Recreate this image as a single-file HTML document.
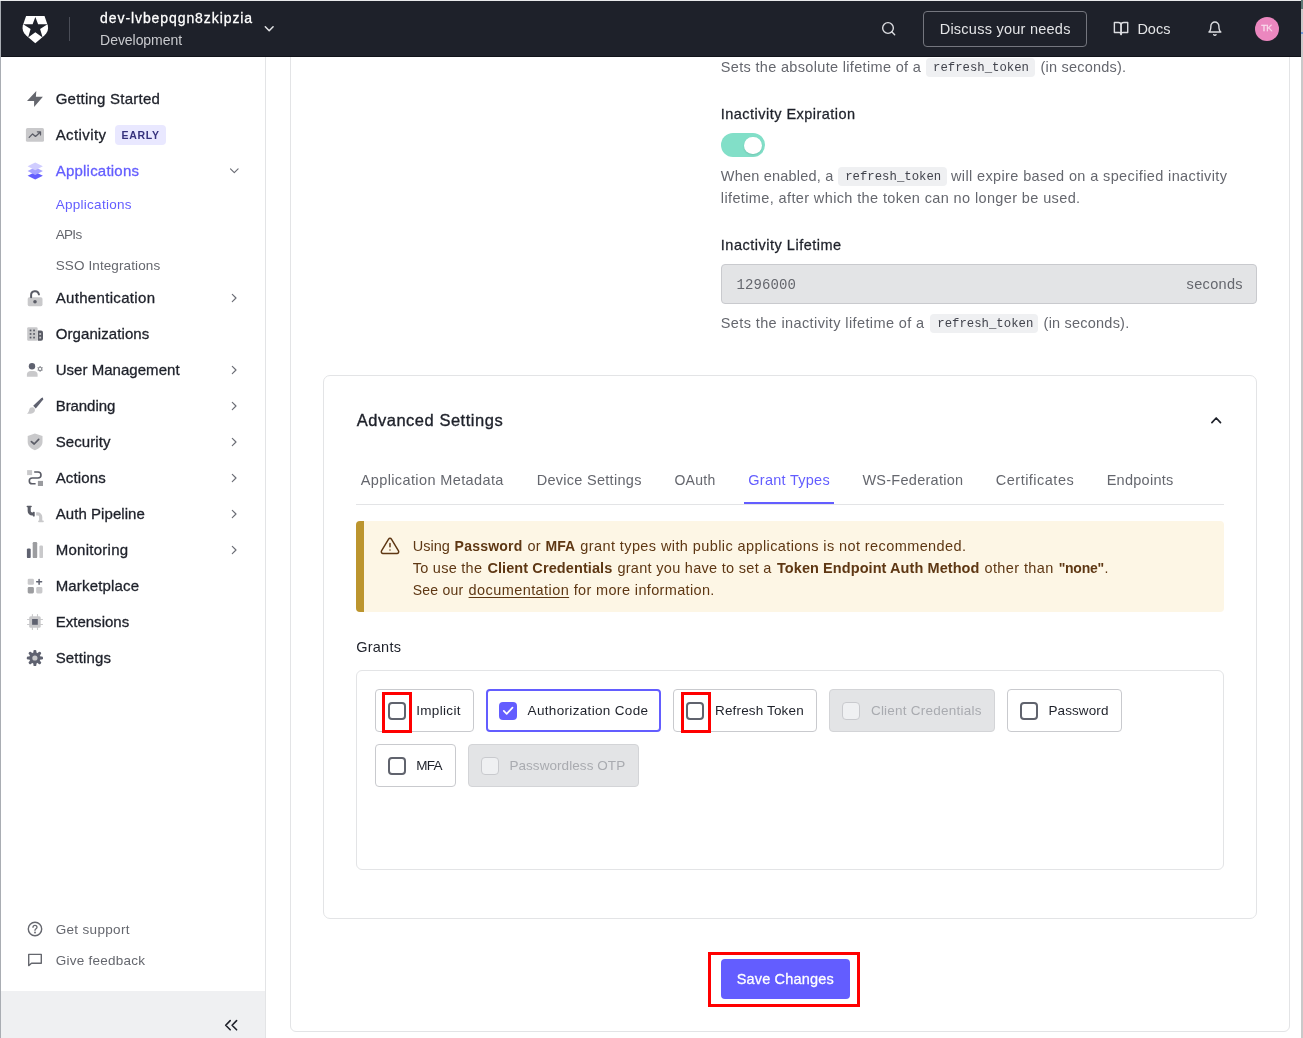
<!DOCTYPE html>
<html lang="en">
<head>
<meta charset="utf-8">
<title>Application Settings - Grant Types</title>
<style>
*{box-sizing:border-box;margin:0;padding:0}
html,body{width:1303px;height:1038px;overflow:hidden;background:#fff}
body{font-family:"Liberation Sans",sans-serif;color:#1e212a;position:relative;font-size:14px}
.a{position:absolute}
.t{position:absolute;white-space:nowrap}
#tx{position:absolute;left:0;top:0;width:1303px;height:1038px;will-change:transform}
svg{position:absolute;left:0;top:0;display:block;overflow:visible}
#fl{left:0;top:0;width:1px;height:1038px;background:#a9adb3}
#ft{left:0;top:0;width:1303px;height:1px;background:#e9eaeb}
#fr{left:1301px;top:0;width:2px;height:1038px;background:#c9c9c9}
#fr2{left:1301px;top:0;width:2px;height:9px;background:#5f7976}
#fr3{left:1301px;top:32px;width:2px;height:2px;background:#6f97d8}
#hdr{left:1px;top:1px;width:1300px;height:56px;background:#1e212a;border-bottom:1px solid #11131a}
#sideb{left:265px;top:57px;width:1px;height:981px;background:#e3e4e6}
#sfoot{left:1px;top:991px;width:264px;height:47px;background:#eff0f2}
#outer{left:290px;top:30px;width:1000px;height:1002px;border:1px solid #e3e4e6;border-radius:6px;background:#fff}
#card{left:323px;top:375px;width:934px;height:544px;border:1px solid #e3e4e6;border-radius:7px;background:#fff}
#tabline{left:356px;top:504px;width:868px;height:1px;background:#e3e4e6}
#tabact{left:744px;top:501.5px;width:90px;height:2.5px;background:#635dff}
#alert{left:356px;top:521px;width:868px;height:91px;background:#fdf6e5;border-radius:4px;overflow:hidden}
#alert i{position:absolute;left:0;top:0;width:8px;height:100%;background:#bc952e}
#gbox{left:356px;top:670px;width:868px;height:200px;border:1px solid #e3e4e6;border-radius:6px}
.chip{position:absolute;height:43px;border:1px solid #c9cace;border-radius:4px;background:#fff}
.chip.dis{background:#e3e4e6;border-color:#d3d4d7}
.chip.on{border:2px solid #635dff}
.cb{position:absolute;width:18px;height:18px;border:2px solid #60636d;border-radius:4px;background:#fff}
.cb.dis{border:1.5px solid #c9cace;background:#eff0f2}
.cb.on{border:0;background:#635dff}
.code{position:absolute;height:19px;background:#eff0f2;border-radius:4px}
#input{left:721px;top:264px;width:536px;height:40px;background:#e3e4e6;border:1px solid #c9cace;border-radius:4px}
#tog{left:721px;top:133.2px;width:44.2px;height:24px;border-radius:12px;background:#82dfc8}
#knob{left:744.3px;top:136.5px;width:17.4px;height:17.4px;border-radius:50%;background:#fff;box-shadow:0 1px 2px rgba(0,0,0,.12)}
#save{left:721px;top:959px;width:129px;height:40px;border-radius:4px;background:#635dff}
#disc{left:923px;top:11px;width:164px;height:36px;border:1px solid #74767e;border-radius:4px}
#ava{left:1254.9px;top:16.9px;width:24.3px;height:24.3px;border-radius:50%;background:#eb87bf}
#early{left:115px;top:125px;width:51px;height:20px;border-radius:4px;background:#e9e8ff}
.red{position:absolute;border:3px solid #ff0000}
</style>
</head>
<body>
<div class="a" id="outer"></div>
<div class="a" id="hdr"></div>
<div class="a" id="sideb"></div>
<div class="a" id="sfoot"></div>
<div class="a" id="disc"></div>
<div class="a" id="ava"></div>
<div class="a" id="early"></div>

<div class="code" style="left:926px;top:58px;width:109px"></div>
<div class="code" style="left:838.3px;top:166.5px;width:108.5px"></div>
<div class="code" style="left:930.4px;top:314px;width:108px"></div>
<div class="a" id="tog"></div><div class="a" id="knob"></div>
<div class="a" id="input"></div>

<div class="a" id="card"></div>
<div class="a" id="tabline"></div>
<div class="a" id="tabact"></div>
<div class="a" id="alert"><i></i></div>
<div class="a" id="gbox"></div>

<div class="chip" style="left:375px;top:689px;width:99px"></div>
<div class="chip on" style="left:486px;top:689px;width:175px"></div>
<div class="chip" style="left:673px;top:689px;width:144px"></div>
<div class="chip dis" style="left:829px;top:689px;width:166px"></div>
<div class="chip" style="left:1007px;top:689px;width:115px"></div>
<div class="chip" style="left:375px;top:744px;width:81px"></div>
<div class="chip dis" style="left:468px;top:744px;width:171px"></div>

<div class="cb" style="left:388px;top:702px"></div>
<div class="cb on" style="left:499px;top:702px"></div>
<div class="cb" style="left:686px;top:702px"></div>
<div class="cb dis" style="left:842px;top:702px"></div>
<div class="cb" style="left:1020px;top:702px"></div>
<div class="cb" style="left:388px;top:756.5px"></div>
<div class="cb dis" style="left:481px;top:756.5px"></div>

<div class="a" id="save"></div>
<div class="red" style="left:382px;top:692px;width:30px;height:41px"></div>
<div class="red" style="left:681px;top:692px;width:30px;height:41px"></div>
<div class="red" style="left:708px;top:952px;width:152px;height:55px"></div>

<svg width="1303" height="1038" viewBox="0 0 1303 1038" fill="none">
<!-- logo -->
<path d="M26.1 15.9H44.5L47.8 25.4C48.7 29.2 47.4 32.8 44.4 35.4L35.3 43.2L26.2 35.4C23.2 32.8 21.9 29.2 22.8 25.4Z" fill="#fff"/>
<path d="M35.35 16.9L38.1 24.3H47.5L40.1 29L42.6 37.4L35.35 32.2L28.1 37.4L30.6 29L23.2 24.3H32.6Z" fill="#1e212a"/>
<rect x="69" y="17" width="1" height="24" fill="#4a4d57"/>
<!-- tenant chevron -->
<path d="M265.3 26.8L269.2 30.8L273.1 26.8" stroke="#e3e4e6" stroke-width="1.5" stroke-linecap="round" stroke-linejoin="round"/>
<!-- search -->
<g transform="translate(880.67 20.67) scale(.6667)" stroke="#dcdde1" stroke-width="2.1" stroke-linecap="round" stroke-linejoin="round"><circle cx="11" cy="11" r="8"/><path d="M21 21L16.65 16.65"/></g>
<!-- docs book -->
<g transform="translate(1113.05 20.57) scale(.6667)" stroke="#dcdde1" stroke-width="2.1" stroke-linecap="round" stroke-linejoin="round"><path d="M2 3h6a4 4 0 0 1 4 4v14a3 3 0 0 0-3-3H2z"/><path d="M22 3h-6a4 4 0 0 0-4 4v14a3 3 0 0 1 3-3h7z"/></g>
<!-- bell -->
<g transform="translate(1206.87 20.63) scale(.6667)" stroke="#dcdde1" stroke-width="2.1" stroke-linecap="round" stroke-linejoin="round"><path d="M18 8A6 6 0 0 0 6 8c0 7-3 9-3 9h18s-3-2-3-9"/><path d="M13.73 21a2 2 0 0 1-3.46 0"/></g>

<!-- lightning -->
<path d="M36.3 91.1L35.9 96.8H42.9L34.1 107.1V101H27L36.3 91.1Z" fill="#65676e"/>
<!-- activity -->
<rect x="25.9" y="128.1" width="18.1" height="13.7" rx="1.6" fill="#c9c9cb"/>
<path d="M29.2 137.4L32.6 133.9L35.5 136.4L40.1 132.2M37.4 131.8H40.5V134.9" stroke="#5a5c66" stroke-width="1.3" stroke-linecap="round" stroke-linejoin="round"/>
<!-- layers -->
<path d="M35.2 171.9L42.9 175.7L35.2 179.6L27.6 175.7Z" fill="#635dff"/>
<path d="M35.2 167.2L42.9 171L35.2 174.9L27.6 171Z" fill="#a7a3ff"/>
<path d="M35.2 162.4L42.9 166.3L35.2 170.2L27.6 166.3Z" fill="#d0cdff"/>
<path d="M230.5 168.8L234.3 172.6L238.1 168.8" stroke="#6b6d75" stroke-width="1.15" stroke-linecap="round" stroke-linejoin="round"/>
<!-- lock -->
<rect x="27.7" y="297.3" width="14.8" height="8.9" rx="1.6" fill="#c9c9cb"/>
<path d="M31.1 297.3V295.4A3.95 3.95 0 0 1 38.9 294.4" stroke="#5a5c66" stroke-width="2" stroke-linecap="round"/>
<circle cx="35" cy="301.8" r="1.8" fill="#5a5c66"/>
<!-- org -->
<rect x="27.2" y="327.2" width="10.4" height="13.6" rx="1.2" fill="#c9c9cb"/>
<path d="M37.9 330.6H41A2 2 0 0 1 43 332.6V338.8A2 2 0 0 1 41 340.8H37.9Z" fill="#5a5c66"/>
<g fill="#5a5c66"><rect x="29.7" y="329.6" width="1.7" height="1.7"/><rect x="33.2" y="329.6" width="1.7" height="1.7"/><rect x="29.7" y="333.1" width="1.7" height="1.7"/><rect x="33.2" y="333.1" width="1.7" height="1.7"/><rect x="29.7" y="336.7" width="1.7" height="1.7"/><rect x="33.2" y="336.7" width="1.7" height="1.7"/></g>
<g fill="#c9c9cb"><rect x="39.3" y="333.1" width="1.8" height="1.8"/><rect x="39.3" y="336.7" width="1.8" height="1.8"/></g>
<!-- user mgmt -->
<circle cx="32" cy="366.3" r="3.2" fill="#5f6270"/>
<path d="M26.9 376.8V374.6C26.9 372.4 28.6 371 30.8 371H33.7C35.9 371 37.6 372.4 37.6 374.6V376.8Z" fill="#c9c9cb"/>
<g stroke="#8b8d93" stroke-width="1.1"><circle cx="40.1" cy="368.9" r="1.7"/><path d="M40.1 366V366.9M40.1 370.9V371.8M37.6 367.45L38.4 367.9M41.8 369.9L42.6 370.35M37.6 370.35L38.4 369.9M41.8 367.9L42.6 367.45"/></g>
<!-- brush -->
<path d="M42.9 397.6L43.2 399.4L35.8 408.6L33.2 405.8L41.4 398Z" fill="#5f6270"/>
<path d="M32.4 407.3C34 407.4 35.3 408.9 34.9 410.9C34.2 413.5 30.2 414.1 27 413.7C28.5 412.6 29 411.1 29.3 409.6C29.6 408.1 30.9 407.2 32.4 407.3Z" fill="#c9c9cb"/>
<!-- shield -->
<path d="M34.9 433.5L42.5 436V442C42.5 445.6 39.6 448.4 34.9 450.2C30.2 448.4 27.7 445.6 27.7 442V436Z" fill="#c9c9cb"/>
<path d="M31.4 441.6L34.2 444L38.7 439.4" stroke="#5a5c66" stroke-width="1.7" stroke-linecap="round" stroke-linejoin="round"/>
<!-- actions -->
<rect x="27.1" y="470.1" width="5" height="5" fill="#c9c9cb"/>
<rect x="37.9" y="480.9" width="5.1" height="5.1" fill="#9a9b9f"/>
<path d="M34.2 472H38A3 3 0 0 1 38 478H32.2A2.9 2.9 0 0 0 32.2 483.8H35.6" stroke="#5a5c66" stroke-width="1.6"/>
<!-- pipeline -->
<path d="M29.2 506.5V511A3 3 0 0 0 32.2 514H33.5" stroke="#5a5c66" stroke-width="3.1"/>
<rect x="26.6" y="505.8" width="5.2" height="1.5" rx=".7" fill="#5a5c66"/>
<rect x="32.9" y="511.7" width="1.8" height="4.9" rx=".7" fill="#5a5c66"/>
<path d="M36.2 513.9H37.7A3 3 0 0 1 40.7 516.9V521" stroke="#c9c9cb" stroke-width="3.2"/>
<rect x="38.1" y="520.6" width="5.7" height="1.7" rx=".8" fill="#c9c9cb"/>
<!-- monitoring -->
<rect x="26.9" y="548.4" width="3.8" height="9.7" rx="1.2" fill="#5f6270"/>
<rect x="32.7" y="542.1" width="4.5" height="16" rx="1.2" fill="#9c9da0"/>
<rect x="39.4" y="545.4" width="3.6" height="12.7" rx="1.2" fill="#c9c9cb"/>
<!-- marketplace -->
<rect x="27.7" y="578.7" width="6.2" height="6.1" rx="1.3" fill="#c9c9cb"/>
<rect x="27.7" y="587.1" width="6.2" height="6.3" rx="1.3" fill="#9c9da0"/>
<rect x="36.2" y="587.1" width="6.2" height="6.3" rx="1.3" fill="#c9c9cb"/>
<path d="M39.1 579.4V584.3M36.7 581.85H41.6" stroke="#5f6270" stroke-width="1.5" stroke-linecap="round"/>
<!-- extensions -->
<path d="M32.4 614.5V629.5M37.5 614.5V629.5M27.5 619.5H42.5M27.5 624.5H42.5" stroke="#c9c9cb" stroke-width="1.1" stroke-linecap="round"/>
<rect x="29.2" y="616.2" width="11.5" height="11.5" rx="1.5" fill="#c9c9cb"/>
<rect x="32.1" y="619" width="5.7" height="5.8" fill="#5f6270"/>
<!-- gear -->
<g transform="translate(34.9 658)" fill="#5f6270">
<circle r="5.7"/>
<g transform="rotate(0)"><rect x="-1.5" y="-8.1" width="3" height="4" rx="1.2"/><rect x="-1.5" y="4.1" width="3" height="4" rx="1.2"/></g><g transform="rotate(45)"><rect x="-1.5" y="-8.1" width="3" height="4" rx="1.2"/><rect x="-1.5" y="4.1" width="3" height="4" rx="1.2"/></g><g transform="rotate(90)"><rect x="-1.5" y="-8.1" width="3" height="4" rx="1.2"/><rect x="-1.5" y="4.1" width="3" height="4" rx="1.2"/></g><g transform="rotate(135)"><rect x="-1.5" y="-8.1" width="3" height="4" rx="1.2"/><rect x="-1.5" y="4.1" width="3" height="4" rx="1.2"/></g>
<circle r="2.6" fill="#c9c9cb"/>
</g>
<!-- nav chevrons right -->
<g stroke="#6b6d75" stroke-width="1.15" stroke-linecap="round" stroke-linejoin="round">
<path d="M232.3 294.3L236 298L232.3 301.7"/>
<path d="M232.3 366.3L236 370L232.3 373.7"/>
<path d="M232.3 402.3L236 406L232.3 409.7"/>
<path d="M232.3 438.3L236 442L232.3 445.7"/>
<path d="M232.3 474.3L236 478L232.3 481.7"/>
<path d="M232.3 510.3L236 514L232.3 517.7"/>
<path d="M232.3 546.3L236 550L232.3 553.7"/>
</g>
<!-- support -->
<circle cx="35" cy="929" r="6.7" stroke="#65676e" stroke-width="1.4"/>
<path d="M33 927.3C33 926 33.9 925.3 35 925.3S37 926 37 927.2C37 928.6 35 928.7 35 930.3" stroke="#65676e" stroke-width="1.3" stroke-linecap="round"/>
<circle cx="35" cy="932.5" r=".9" fill="#65676e"/>
<!-- feedback -->
<path d="M28.7 954.4H41.3V963.2H31.5L28.7 965.6Z" stroke="#65676e" stroke-width="1.4" stroke-linejoin="round"/>
<!-- collapse -->
<path d="M230.2 1020.6L225.7 1025.2L230.2 1029.8M236.6 1020.6L232.1 1025.2L236.6 1029.8" stroke="#1e212a" stroke-width="1.6" stroke-linecap="round" stroke-linejoin="round"/>
<!-- card chevron up -->
<path d="M1211.9 422.6L1216.2 418L1220.5 422.6" stroke="#1e212a" stroke-width="1.7" stroke-linecap="round" stroke-linejoin="round"/>
<!-- alert icon -->
<g transform="translate(380 535.9) scale(.8333)" stroke="#5e3713" stroke-width="1.75" stroke-linecap="round" stroke-linejoin="round"><path d="M10.29 3.86L1.82 18a2 2 0 0 0 1.71 3h16.94a2 2 0 0 0 1.71-3L13.71 3.86a2 2 0 0 0-3.42 0z"/><path d="M12 9v4M12 17h.01"/></g>
<!-- check -->
<path d="M503.8 710.9L506.7 713.8L512.5 707.6" stroke="#fff" stroke-width="1.7" stroke-linecap="round" stroke-linejoin="round"/>
</svg>

<div id="tx">
<span class="t" style="left:100.1px;top:8.15px;font-size:14px;line-height:20px;height:20px;color:#ffffff;-webkit-text-stroke:0.28px;letter-spacing:0.914px;">dev-lvbepqgn8zkipzia</span>
<span class="t" style="left:100.1px;top:30.15px;font-size:14px;line-height:20px;height:20px;color:#c9cace;letter-spacing:-0.050px;">Development</span>
<span class="t" style="left:939.7px;top:18.88px;font-size:14.5px;line-height:20px;height:20px;color:#e3e4e6;letter-spacing:0.245px;">Discuss your needs</span>
<span class="t" style="left:1137.4px;top:18.78px;font-size:14.5px;line-height:20px;height:20px;color:#e3e4e6;letter-spacing:-0.016px;">Docs</span>
<span class="t" style="left:1261.2px;top:22.38px;font-size:9px;line-height:13px;height:13px;color:#f9dcec;-webkit-text-stroke:0.28px;letter-spacing:-0.316px;">TK</span>
<span class="t" style="left:55.7px;top:88.10px;font-size:15px;line-height:21px;height:21px;color:#1e212a;-webkit-text-stroke:0.3px;letter-spacing:0.235px;">Getting Started</span>
<span class="t" style="left:55.7px;top:124.10px;font-size:15px;line-height:21px;height:21px;color:#1e212a;-webkit-text-stroke:0.3px;letter-spacing:0.398px;">Activity</span>
<span class="t" style="left:55.7px;top:160.10px;font-size:15px;line-height:21px;height:21px;color:#635dff;-webkit-text-stroke:0.3px;letter-spacing:0.219px;">Applications</span>
<span class="t" style="left:55.7px;top:287.10px;font-size:15px;line-height:21px;height:21px;color:#1e212a;-webkit-text-stroke:0.3px;letter-spacing:0.325px;">Authentication</span>
<span class="t" style="left:55.7px;top:323.10px;font-size:15px;line-height:21px;height:21px;color:#1e212a;-webkit-text-stroke:0.3px;letter-spacing:0.086px;">Organizations</span>
<span class="t" style="left:55.7px;top:359.10px;font-size:15px;line-height:21px;height:21px;color:#1e212a;-webkit-text-stroke:0.3px;letter-spacing:0.035px;">User Management</span>
<span class="t" style="left:55.7px;top:395.10px;font-size:15px;line-height:21px;height:21px;color:#1e212a;-webkit-text-stroke:0.3px;letter-spacing:-0.064px;">Branding</span>
<span class="t" style="left:55.7px;top:431.10px;font-size:15px;line-height:21px;height:21px;color:#1e212a;-webkit-text-stroke:0.3px;letter-spacing:0.087px;">Security</span>
<span class="t" style="left:55.7px;top:467.10px;font-size:15px;line-height:21px;height:21px;color:#1e212a;-webkit-text-stroke:0.3px;letter-spacing:0.149px;">Actions</span>
<span class="t" style="left:55.7px;top:503.10px;font-size:15px;line-height:21px;height:21px;color:#1e212a;-webkit-text-stroke:0.3px;letter-spacing:0.066px;">Auth Pipeline</span>
<span class="t" style="left:55.7px;top:539.10px;font-size:15px;line-height:21px;height:21px;color:#1e212a;-webkit-text-stroke:0.3px;letter-spacing:0.273px;">Monitoring</span>
<span class="t" style="left:55.7px;top:575.10px;font-size:15px;line-height:21px;height:21px;color:#1e212a;-webkit-text-stroke:0.3px;letter-spacing:0.170px;">Marketplace</span>
<span class="t" style="left:55.7px;top:611.10px;font-size:15px;line-height:21px;height:21px;color:#1e212a;-webkit-text-stroke:0.3px;letter-spacing:0.014px;">Extensions</span>
<span class="t" style="left:55.7px;top:647.10px;font-size:15px;line-height:21px;height:21px;color:#1e212a;-webkit-text-stroke:0.3px;letter-spacing:0.142px;">Settings</span>
<span class="t" style="left:121.6px;top:127.96px;font-size:10.5px;line-height:15px;height:15px;color:#37327d;font-weight:bold;letter-spacing:0.669px;">EARLY</span>
<span class="t" style="left:55.7px;top:194.72px;font-size:13.5px;line-height:19px;height:19px;color:#635dff;letter-spacing:0.273px;">Applications</span>
<span class="t" style="left:55.7px;top:224.92px;font-size:13.5px;line-height:19px;height:19px;color:#65676e;letter-spacing:-0.672px;">APIs</span>
<span class="t" style="left:55.7px;top:255.52px;font-size:13.5px;line-height:19px;height:19px;color:#65676e;letter-spacing:0.113px;">SSO Integrations</span>
<span class="t" style="left:55.7px;top:919.82px;font-size:13.5px;line-height:19px;height:19px;color:#65676e;letter-spacing:0.325px;">Get support</span>
<span class="t" style="left:55.7px;top:950.82px;font-size:13.5px;line-height:19px;height:19px;color:#65676e;letter-spacing:0.257px;">Give feedback</span>
<span class="t" style="left:720.8px;top:57.08px;font-size:14.5px;line-height:20px;height:20px;color:#65676e;letter-spacing:0.326px;">Sets the absolute lifetime of a</span>
<span class="t" style="left:933.0px;top:60.22px;font-size:12.3px;line-height:17px;height:17px;color:#41434c;font-family:'Liberation Mono',monospace;letter-spacing:0.005px;">refresh_token</span>
<span class="t" style="left:1040.6px;top:57.08px;font-size:14.5px;line-height:20px;height:20px;color:#65676e;letter-spacing:0.199px;">(in seconds).</span>
<span class="t" style="left:720.8px;top:104.28px;font-size:14.5px;line-height:20px;height:20px;color:#1e212a;-webkit-text-stroke:0.28px;letter-spacing:0.469px;">Inactivity Expiration</span>
<span class="t" style="left:720.8px;top:166.18px;font-size:14.5px;line-height:20px;height:20px;color:#65676e;letter-spacing:0.197px;">When enabled, a</span>
<span class="t" style="left:845.2px;top:169.32px;font-size:12.3px;line-height:17px;height:17px;color:#41434c;font-family:'Liberation Mono',monospace;letter-spacing:0.005px;">refresh_token</span>
<span class="t" style="left:951.0px;top:166.18px;font-size:14.5px;line-height:20px;height:20px;color:#65676e;letter-spacing:0.373px;">will expire based on a specified inactivity</span>
<span class="t" style="left:720.8px;top:187.98px;font-size:14.5px;line-height:20px;height:20px;color:#65676e;letter-spacing:0.377px;">lifetime, after which the token can no longer be used.</span>
<span class="t" style="left:720.8px;top:234.78px;font-size:14.5px;line-height:20px;height:20px;color:#1e212a;-webkit-text-stroke:0.28px;letter-spacing:0.510px;">Inactivity Lifetime</span>
<span class="t" style="left:736.5px;top:275.37px;font-size:14px;line-height:20px;height:20px;color:#65676e;font-family:'Liberation Mono',monospace;letter-spacing:0.098px;">1296000</span>
<span class="t" style="left:1186.6px;top:273.68px;font-size:14.5px;line-height:20px;height:20px;color:#65676e;letter-spacing:0.331px;">seconds</span>
<span class="t" style="left:720.8px;top:312.98px;font-size:14.5px;line-height:20px;height:20px;color:#65676e;letter-spacing:0.384px;">Sets the inactivity lifetime of a</span>
<span class="t" style="left:937.3px;top:316.12px;font-size:12.3px;line-height:17px;height:17px;color:#41434c;font-family:'Liberation Mono',monospace;letter-spacing:0.005px;">refresh_token</span>
<span class="t" style="left:1043.6px;top:312.98px;font-size:14.5px;line-height:20px;height:20px;color:#65676e;letter-spacing:0.215px;">(in seconds).</span>
<span class="t" style="left:356.7px;top:409.38px;font-size:16.5px;line-height:23px;height:23px;color:#1e212a;-webkit-text-stroke:0.35px;letter-spacing:0.525px;">Advanced Settings</span>
<span class="t" style="left:360.7px;top:470.18px;font-size:14.5px;line-height:20px;height:20px;color:#65676e;letter-spacing:0.383px;">Application Metadata</span>
<span class="t" style="left:536.7px;top:470.18px;font-size:14.5px;line-height:20px;height:20px;color:#65676e;letter-spacing:0.282px;">Device Settings</span>
<span class="t" style="left:674.4px;top:470.35px;font-size:14px;line-height:20px;height:20px;color:#65676e;letter-spacing:0.299px;">OAuth</span>
<span class="t" style="left:748.3px;top:470.18px;font-size:14.5px;line-height:20px;height:20px;color:#635dff;letter-spacing:0.268px;">Grant Types</span>
<span class="t" style="left:862.4px;top:470.18px;font-size:14.5px;line-height:20px;height:20px;color:#65676e;letter-spacing:0.265px;">WS-Federation</span>
<span class="t" style="left:995.8px;top:470.18px;font-size:14.5px;line-height:20px;height:20px;color:#65676e;letter-spacing:0.488px;">Certificates</span>
<span class="t" style="left:1106.7px;top:470.18px;font-size:14.5px;line-height:20px;height:20px;color:#65676e;letter-spacing:0.262px;">Endpoints</span>
<span class="t" style="left:412.7px;top:536.18px;font-size:14.5px;line-height:20px;height:20px;color:#5e3713;letter-spacing:0.005px;">Using</span>
<span class="t" style="left:454.6px;top:536.35px;font-size:14px;line-height:20px;height:20px;color:#5e3713;font-weight:bold;letter-spacing:0.223px;">Password</span>
<span class="t" style="left:527.6px;top:536.18px;font-size:14.5px;line-height:20px;height:20px;color:#5e3713;letter-spacing:-0.006px;">or</span>
<span class="t" style="left:545.6px;top:536.35px;font-size:14px;line-height:20px;height:20px;color:#5e3713;font-weight:bold;letter-spacing:0.019px;">MFA</span>
<span class="t" style="left:580.3px;top:536.18px;font-size:14.5px;line-height:20px;height:20px;color:#5e3713;letter-spacing:0.404px;">grant types with public applications is not recommended.</span>
<span class="t" style="left:412.7px;top:557.98px;font-size:14.5px;line-height:20px;height:20px;color:#5e3713;letter-spacing:0.264px;">To use the</span>
<span class="t" style="left:487.4px;top:557.98px;font-size:14.5px;line-height:20px;height:20px;color:#5e3713;font-weight:bold;letter-spacing:0.095px;">Client Credentials</span>
<span class="t" style="left:617.4px;top:557.98px;font-size:14.5px;line-height:20px;height:20px;color:#5e3713;letter-spacing:0.295px;">grant you have to set a</span>
<span class="t" style="left:777.0px;top:557.98px;font-size:14.5px;line-height:20px;height:20px;color:#5e3713;font-weight:bold;letter-spacing:0.074px;">Token Endpoint Auth Method</span>
<span class="t" style="left:984.5px;top:557.98px;font-size:14.5px;line-height:20px;height:20px;color:#5e3713;letter-spacing:0.387px;">other than</span>
<span class="t" style="left:1058.7px;top:558.15px;font-size:14px;line-height:20px;height:20px;color:#5e3713;font-weight:bold;letter-spacing:-0.264px;">&quot;none&quot;</span>
<span class="t" style="left:1104.6px;top:558.15px;font-size:14px;line-height:20px;height:20px;color:#5e3713;">.</span>
<span class="t" style="left:412.7px;top:580.15px;font-size:14px;line-height:20px;height:20px;color:#5e3713;letter-spacing:0.242px;">See our</span>
<span class="t" style="left:468.6px;top:579.98px;font-size:14.5px;line-height:20px;height:20px;color:#5e3713;letter-spacing:0.415px;text-decoration:underline;text-underline-offset:2px;text-decoration-thickness:1px">documentation</span>
<span class="t" style="left:573.7px;top:579.98px;font-size:14.5px;line-height:20px;height:20px;color:#5e3713;letter-spacing:0.346px;">for more information.</span>
<span class="t" style="left:356.3px;top:637.28px;font-size:14.5px;line-height:20px;height:20px;color:#1e212a;letter-spacing:0.217px;">Grants</span>
<span class="t" style="left:416.2px;top:701.02px;font-size:13.5px;line-height:19px;height:19px;color:#1e212a;letter-spacing:0.326px;">Implicit</span>
<span class="t" style="left:527.6px;top:701.02px;font-size:13.5px;line-height:19px;height:19px;color:#1e212a;letter-spacing:0.328px;">Authorization Code</span>
<span class="t" style="left:715.0px;top:701.02px;font-size:13.5px;line-height:19px;height:19px;color:#1e212a;letter-spacing:0.157px;">Refresh Token</span>
<span class="t" style="left:870.9px;top:701.02px;font-size:13.5px;line-height:19px;height:19px;color:#a9abb0;letter-spacing:0.237px;">Client Credentials</span>
<span class="t" style="left:1048.4px;top:701.02px;font-size:13.5px;line-height:19px;height:19px;color:#1e212a;letter-spacing:0.117px;">Password</span>
<span class="t" style="left:416.2px;top:756.02px;font-size:13.5px;line-height:19px;height:19px;color:#1e212a;letter-spacing:-0.733px;">MFA</span>
<span class="t" style="left:509.4px;top:756.02px;font-size:13.5px;line-height:19px;height:19px;color:#a9abb0;letter-spacing:0.067px;">Passwordless OTP</span>
<span class="t" style="left:736.7px;top:968.98px;font-size:14.5px;line-height:20px;height:20px;color:#ffffff;-webkit-text-stroke:0.28px;letter-spacing:0.170px;">Save Changes</span>
</div>
<div class="a" id="fl"></div>
<div class="a" id="ft"></div>
<div class="a" id="fr"></div>
<div class="a" id="fr2"></div>
<div class="a" id="fr3"></div>
</body>
</html>
